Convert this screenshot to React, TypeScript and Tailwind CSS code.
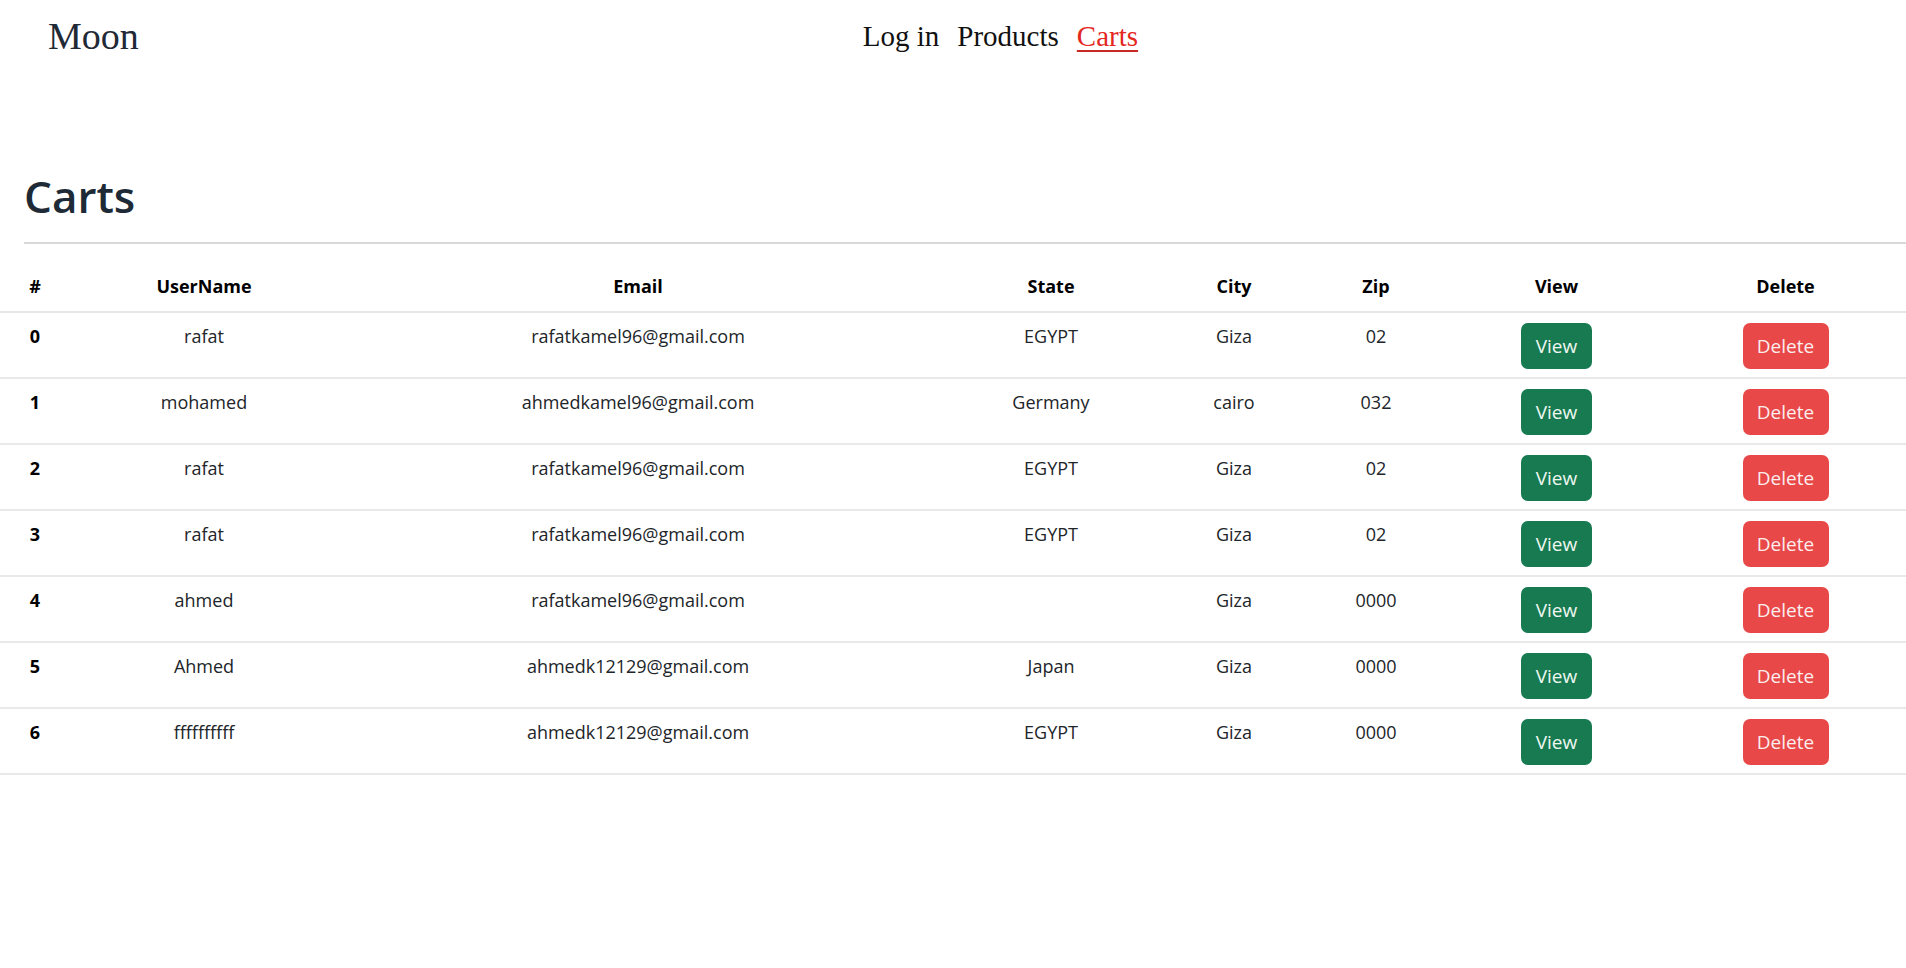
import React from 'react';

const rows = [
  { id: 0, user: 'rafat', email: 'rafatkamel96@gmail.com', state: 'EGYPT', city: 'Giza', zip: '02' },
  { id: 1, user: 'mohamed', email: 'ahmedkamel96@gmail.com', state: 'Germany', city: 'cairo', zip: '032' },
  { id: 2, user: 'rafat', email: 'rafatkamel96@gmail.com', state: 'EGYPT', city: 'Giza', zip: '02' },
  { id: 3, user: 'rafat', email: 'rafatkamel96@gmail.com', state: 'EGYPT', city: 'Giza', zip: '02' },
  { id: 4, user: 'ahmed', email: 'rafatkamel96@gmail.com', state: '', city: 'Giza', zip: '0000' },
  { id: 5, user: 'Ahmed', email: 'ahmedk12129@gmail.com', state: 'Japan', city: 'Giza', zip: '0000' },
  { id: 6, user: 'ffffffffff', email: 'ahmedk12129@gmail.com', state: 'EGYPT', city: 'Giza', zip: '0000' },
];

const cell = 'px-0 pt-[8px] pb-[10px] align-top text-center';
const btnCell = 'px-0 pt-[10px] pb-[8px] align-top text-center';

export default function App() {
  return (
    <div className="min-h-[968px] bg-white text-[#212529] font-['Open_Sans',sans-serif]">
      {/* top bar */}
      <nav className="flex items-center h-[72px] pl-[48px] font-['Liberation_Serif',serif]">
        <span className="text-[38px] leading-none text-[#1f2a36]">Moon</span>
        <div className="flex items-center gap-[18px] ml-[724px] text-[29px] leading-none text-[#111]">
          <a href="#">Log in</a>
          <a href="#">Products</a>
          <a href="#" className="text-[#e4271f] underline decoration-[#c72a20] underline-offset-[4px]">Carts</a>
        </div>
      </nav>

      <div className="pt-[96px]">
        <h1 className="pl-[24px] text-[44px] font-semibold leading-[56px] text-[#1e2a35]">Carts</h1>
        <div className="ml-[24px] mt-[18px] border-t-2 border-[#d9d9d9]" />

        <table className="mt-[19px] w-full table-fixed border-collapse text-[18px] leading-[30px]">
          <colgroup>
            <col className="w-[70px]" />
            <col className="w-[268px]" />
            <col className="w-[600px]" />
            <col className="w-[226px]" />
            <col className="w-[140px]" />
            <col className="w-[144px]" />
            <col className="w-[217px]" />
            <col className="w-[241px]" />
          </colgroup>
          <thead>
            <tr className="border-b-2 border-[#e6e6e6] font-bold text-black">
              <th className={cell}>#</th>
              <th className={cell}>UserName</th>
              <th className={cell}>Email</th>
              <th className={cell}>State</th>
              <th className={cell}>City</th>
              <th className={cell}>Zip</th>
              <th className={cell}>View</th>
              <th className={cell}>Delete</th>
            </tr>
          </thead>
          <tbody>
            {rows.map((r) => (
              <tr key={r.id} className="border-b-2 border-[#e9e9e9]">
                <td className={`${cell} font-bold text-black`}>{r.id}</td>
                <td className={cell}>{r.user}</td>
                <td className={cell}>{r.email}</td>
                <td className={cell}>{r.state}</td>
                <td className={cell}>{r.city}</td>
                <td className={cell}>{r.zip}</td>
                <td className={btnCell}>
                  <button className="h-[46px] w-[71px] rounded-[7px] bg-[#177a51] text-[19px] text-[#eef7f0]">View</button>
                </td>
                <td className={btnCell}>
                  <button className="h-[46px] w-[86px] rounded-[7px] bg-[#e84848] text-[19px] text-[#fbeeee]">Delete</button>
                </td>
              </tr>
            ))}
          </tbody>
        </table>
      </div>
    </div>
  );
}
